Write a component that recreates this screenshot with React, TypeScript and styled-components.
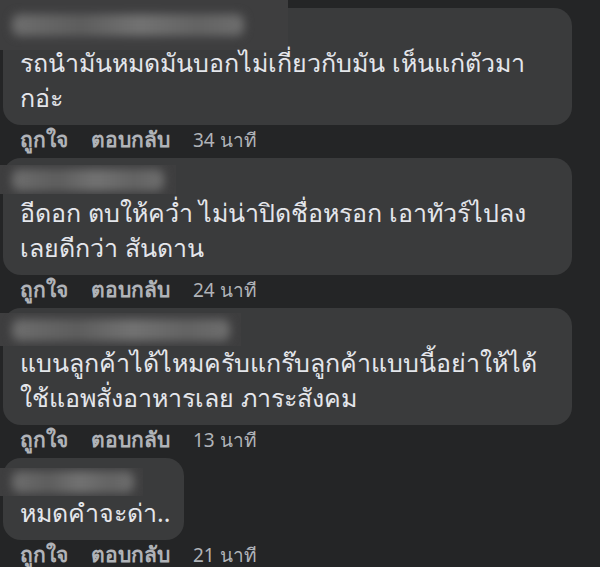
import React from 'react';
import styled, { createGlobalStyle } from 'styled-components';

type Comment = {
  name: { w: number; h: number; top: number; blob: number };
  lines: string[];
  time: string;
  wide: boolean;
};

const comments: Comment[] = [
  {
    name: { w: 288, h: 50, top: -8, blob: 232 },
    lines: ['รถนำมันหมดมันบอกไม่เกี่ยวกับมัน เห็นแก่ตัวมา', 'กอ่ะ'],
    time: '34 นาที',
    wide: true,
  },
  {
    name: { w: 176, h: 29, top: 7, blob: 152 },
    lines: ['อีดอก ตบให้คว่ำ ไม่น่าปิดชื่อหรอก เอาทัวร์ไปลง', 'เลยดีกว่า สันดาน'],
    time: '24 นาที',
    wide: true,
  },
  {
    name: { w: 241, h: 33, top: 5, blob: 218 },
    lines: ['แบนลูกค้าได้ไหมครับแกร๊บลูกค้าแบบนี้อย่าให้ได้', 'ใช้แอพสั่งอาหารเลย ภาระสังคม'],
    time: '13 นาที',
    wide: true,
  },
  {
    name: { w: 143, h: 28, top: 10, blob: 122 },
    lines: ['หมดคำจะด่า..'],
    time: '21 นาที',
    wide: false,
  },
];

const App = () => {
  return (
    <>
      <GlobalStyle />
      <Thread>
        {comments.map((c, i) => (
          <CommentItem key={i}>
            <Bubble $wide={c.wide}>
              <NameRow>
                <Censor $w={c.name.w} $h={c.name.h} $top={c.name.top}>
                  <Smudge $w={c.name.blob} />
                </Censor>
              </NameRow>
              {c.lines.map((l, j) => (
                <Line key={j}>{l}</Line>
              ))}
            </Bubble>
            <Actions>
              <ActionLink>ถูกใจ</ActionLink>
              <ActionLink>ตอบกลับ</ActionLink>
              <Time>{c.time}</Time>
            </Actions>
          </CommentItem>
        ))}
      </Thread>
    </>
  );
};

const GlobalStyle = createGlobalStyle`
  html, body {
    margin: 0;
    padding: 0;
    background: #242526;
  }
  body {
    width: 600px;
    height: 567px;
    overflow: hidden;
    font-family: Tahoma, "Noto Sans", "Liberation Sans", sans-serif;
  }
`;

const Thread = styled.div`
  display: flex;
  flex-direction: column;
  padding-top: 8px;
  width: 600px;
  height: 567px;
  box-sizing: border-box;
  background: #242526;
  overflow: hidden;
`;

const CommentItem = styled.div`
  display: flex;
  flex-direction: column;
  align-items: flex-start;
  flex-shrink: 0;
`;

const Bubble = styled.div<{ $wide: boolean }>`
  margin-left: 3px;
  width: ${(p) => (p.$wide ? '569px' : 'auto')};
  box-sizing: border-box;
  padding: 0 ${(p) => (p.$wide ? 17 : 14)}px 10px 17px;
  background: #3a3b3c;
  border-radius: 18px;
`;

const NameRow = styled.div`
  display: flex;
  height: 37px;
`;

const Censor = styled.div<{ $w: number; $h: number; $top: number }>`
  display: flex;
  align-items: center;
  flex-shrink: 0;
  margin-left: -20px;
  margin-top: ${(p) => p.$top}px;
  width: ${(p) => p.$w}px;
  height: ${(p) => p.$h}px;
  background: #3e3e3f;
  overflow: hidden;
`;

const Smudge = styled.div<{ $w: number }>`
  margin-left: 12px;
  width: ${(p) => p.$w}px;
  height: 22px;
  border-radius: 8px;
  background: linear-gradient(90deg, #6e6e6e, #5e5e5e 30%, #737373 55%, #646464 80%, #6e6e6e);
  filter: blur(5px);
`;

const Line = styled.div`
  color: #e4e6eb;
  font-size: 25px;
  line-height: 35px;
  white-space: nowrap;
`;

const Actions = styled.div`
  display: flex;
  align-items: baseline;
  gap: 23px;
  height: 33px;
  box-sizing: border-box;
  padding: 3px 0 0 20px;
  font-size: 21px;
  line-height: 22px;
  color: #b0b3b8;
`;

const ActionLink = styled.span`
  font-weight: 700;
`;

const Time = styled.span`
  font-size: 19px;
  font-weight: 400;
`;

export default App;
